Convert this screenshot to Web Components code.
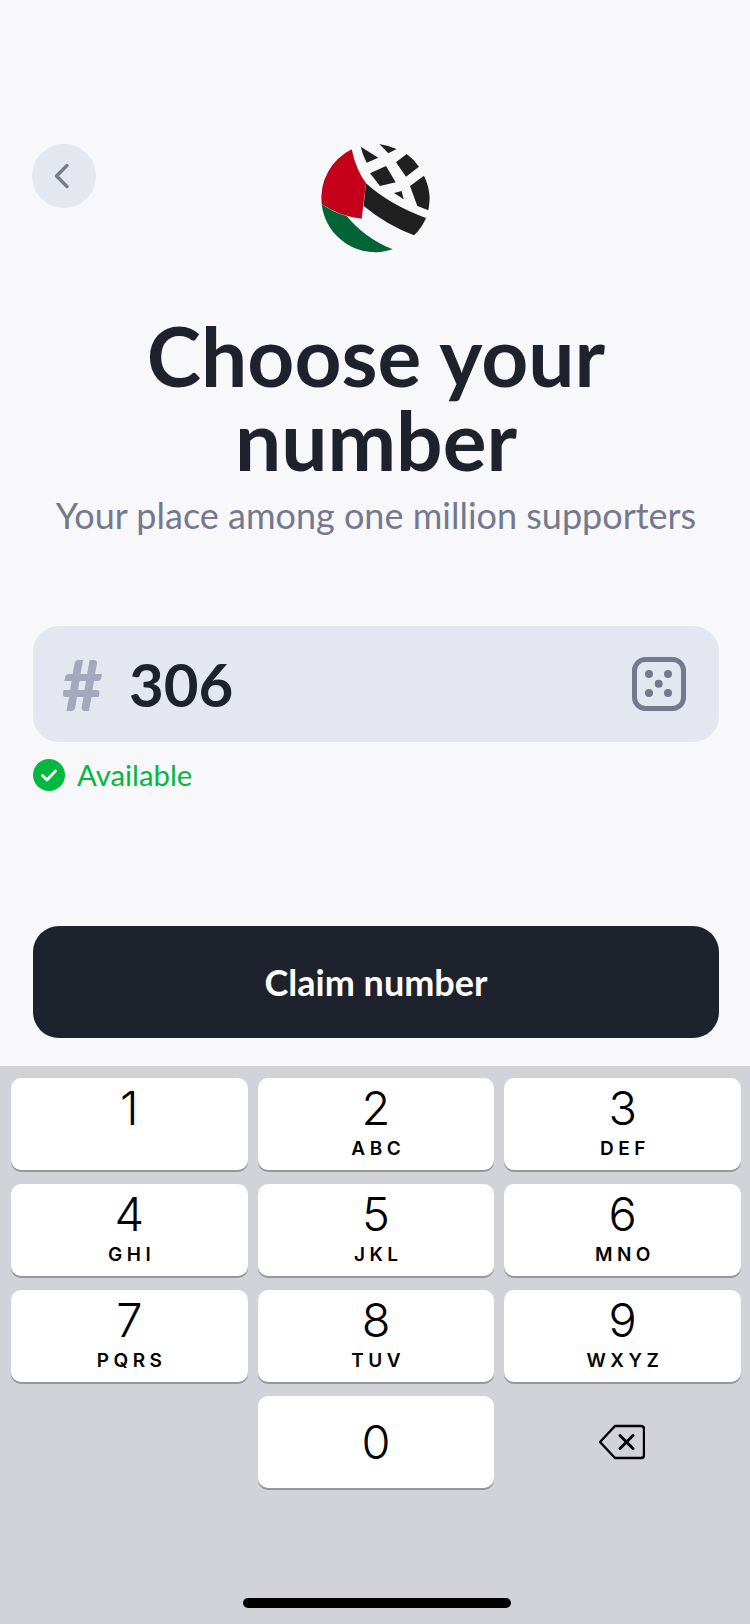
<!DOCTYPE html>
<html lang="en">
<head>
<meta charset="utf-8">
<title>Choose your number</title>
<style>
  html, body { margin: 0; padding: 0; background: #f8f8fb; }
  body { width: 750px; height: 1624px; overflow: hidden; font-family: Lato, "Noto Sans", sans-serif; }
</style>
</head>
<body>
<claim-screen>
  <top-bar></top-bar>
  <intro-text heading="Choose your number" sub="Your place among one million supporters"></intro-text>
  <number-field value="306"></number-field>
  <status-line>Available</status-line>
  <claim-button>Claim number</claim-button>
</claim-screen>
<num-pad>
  <pad-key digit="1"></pad-key>
  <pad-key digit="2" letters="ABC"></pad-key>
  <pad-key digit="3" letters="DEF"></pad-key>
  <pad-key digit="4" letters="GHI"></pad-key>
  <pad-key digit="5" letters="JKL"></pad-key>
  <pad-key digit="6" letters="MNO"></pad-key>
  <pad-key digit="7" letters="PQRS"></pad-key>
  <pad-key digit="8" letters="TUV"></pad-key>
  <pad-key digit="9" letters="WXYZ"></pad-key>
  <pad-key blank></pad-key>
  <pad-key digit="0" center></pad-key>
  <pad-key erase></pad-key>
</num-pad>

<script>
class ClaimScreen extends HTMLElement {
  constructor() {
    super();
    this._shadowRoot = this.attachShadow({ mode: "open" });
    this._shadowRoot.innerHTML = `
      <style>
        :host { display: flex; flex-direction: column; height: 1066px; box-sizing: border-box; padding: 144px 31px 28px 33px; }
      </style>
      <slot></slot>`;
  }
}

class TopBar extends HTMLElement {
  constructor() {
    super();
    this._shadowRoot = this.attachShadow({ mode: "open" });
    this._shadowRoot.innerHTML = `
      <style>
        :host { display: grid; grid-template-columns: 64px 1fr 64px; align-items: start; height: 110px; margin-left: -1px; }
        .back { width: 64px; height: 64px; border-radius: 50%; background: #e4e7ef; display: flex; align-items: center; justify-content: center; }
        .logo { justify-self: center; display: block; margin: -14px 0 0 -1px; }
      </style>
      <div class="back">
        <svg width="24" height="28" viewBox="0 0 24 28" fill="none"><path d="M15 3.5 L4.5 14 L15 24.5" stroke="#767b8a" stroke-width="3.4" stroke-linecap="round" stroke-linejoin="round"/></svg>
      </div>
      <svg class="logo" width="150" height="130" viewBox="0 0 450 390">
        <path fill="#c5001a" d="M155 58 A162 162 0 0 0 65 222 Q115 258 185 266 L198 160 Q168 120 155 58Z"/>
        <path fill="#006437" d="M65 222 A162 162 0 0 0 278 358 Q195 325 140 258 Q100 248 65 222Z"/>
        <g fill="#202020">
          <path d="M198 160 Q270 225 378 264 Q365 295 342 316 Q260 285 191 228Z"/>
          <path d="M182 50 L235 83 L200 98 Q188 75 182 50Z"/>
          <path d="M238 42 Q265 46 290 57 L265 70Z"/>
          <path d="M320 72 Q342 88 357 110 L318 140 L288 97Z"/>
          <path d="M258 108 L287 157 L240 168 L210 130Z"/>
          <path d="M282 189 L305 183 L311 208Z"/>
          <path d="M372 137 Q388 170 389 205 Q388 225 385 241 L352 228 L330 168Z"/>
        </g>
      </svg>`;
  }
}

class IntroText extends HTMLElement {
  constructor() {
    super();
    this._shadowRoot = this.attachShadow({ mode: "open" });
  }
  connectedCallback() {
    this._shadowRoot.innerHTML = `
      <style>
        :host { display: block; text-align: center; margin-top: 59px; }
        h1 { margin: 0 auto; width: 560px; font: 700 82px/84px Lato, sans-serif; color: #1e222c; }
        p { margin: 12px 0 0; font: 400 36px/44px Lato, sans-serif; color: #75798f; }
      </style>
      <h1>${this.getAttribute("heading")}</h1>
      <p>${this.getAttribute("sub")}</p>`;
  }
}

class NumberField extends HTMLElement {
  constructor() {
    super();
    this._shadowRoot = this.attachShadow({ mode: "open" });
  }
  connectedCallback() {
    this._shadowRoot.innerHTML = `
      <style>
        :host { display: flex; align-items: center; height: 116px; margin-top: 89px; padding: 0 33px 0 29px; border-radius: 26px; background: #e4e7ef; }
        .hash { width: 67px; font: 900 70px/1 Lato, sans-serif; color: #a5a8bd; }
        .val { flex: 1; font: 700 60px/1 Lato, sans-serif; color: #1e222c; }
      </style>
      <span class="hash">#</span>
      <span class="val">${this.getAttribute("value")}</span>
      <svg width="54" height="54" viewBox="0 0 54 54" fill="none">
        <rect x="2.5" y="2.5" width="49" height="49" rx="11" stroke="#75798f" stroke-width="5"/>
        <g fill="#75798f"><circle cx="17" cy="17" r="4"/><circle cx="36" cy="17" r="4"/><circle cx="26.7" cy="26.7" r="4"/><circle cx="17" cy="36" r="4"/><circle cx="36" cy="36" r="4"/></g>
      </svg>`;
  }
}

class StatusLine extends HTMLElement {
  constructor() {
    super();
    this._shadowRoot = this.attachShadow({ mode: "open" });
    this._shadowRoot.innerHTML = `
      <style>
        :host { display: flex; align-items: center; gap: 12px; margin-top: 17px; height: 32px; font: 400 29.3px/32px Lato, sans-serif; color: #00b93e; }
      </style>
      <svg width="32" height="32" viewBox="0 0 32 32"><circle cx="16" cy="16" r="16" fill="#00b93e"/><path d="M9.5 16.5 L14 21 L22.5 12" fill="none" stroke="#fff" stroke-width="2.8" stroke-linecap="round" stroke-linejoin="round"/></svg>
      <slot></slot>`;
  }
}

class ClaimButton extends HTMLElement {
  constructor() {
    super();
    this._shadowRoot = this.attachShadow({ mode: "open" });
    this._shadowRoot.innerHTML = `
      <style>
        :host { display: flex; align-items: center; justify-content: center; height: 112px; margin-top: auto; border-radius: 26px; background: #1e222c; color: #fff; font: 700 36px/1 Lato, sans-serif; }
      </style>
      <slot></slot>`;
  }
}

class NumPad extends HTMLElement {
  constructor() {
    super();
    this._shadowRoot = this.attachShadow({ mode: "open" });
    this._shadowRoot.innerHTML = `
      <style>
        :host { display: block; position: relative; height: 558px; box-sizing: border-box; padding: 12px 9px 0 11px; background: #d1d3d9; }
        .grid { display: grid; grid-template-columns: repeat(3, 1fr); grid-auto-rows: 92px; gap: 14px 10px; }
        .home { position: absolute; left: 243px; bottom: 16px; width: 268px; height: 10px; border-radius: 5px; background: #000; }
      </style>
      <div class="grid"><slot></slot></div>
      <div class="home"></div>`;
  }
}

class PadKey extends HTMLElement {
  constructor() {
    super();
    this._shadowRoot = this.attachShadow({ mode: "open" });
  }
  connectedCallback() {
    const digit = this.getAttribute("digit");
    const letters = this.getAttribute("letters");
    let body = "";
    if (digit) {
      body = `<span class="d">${digit}</span>` + (letters ? `<span class="l">${letters}</span>` : "");
    } else if (this.hasAttribute("erase")) {
      body = `<svg style="margin-right:2px" width="46" height="36" viewBox="0 0 46 36" fill="none" stroke="#000" stroke-linejoin="round" stroke-linecap="round">
        <path d="M16 2 H42 Q45 2 45 5 V31 Q45 34 42 34 H16 L1 18Z" stroke-width="2.4"/>
        <path d="M21 11.5 L34 24.5 M34 11.5 L21 24.5" stroke-width="3"/></svg>`;
    }
    const plain = !digit;
    const centered = plain || this.hasAttribute("center");
    this._shadowRoot.innerHTML = `
      <style>
        :host { display: block; }
        .key { height: 100%; box-sizing: border-box; display: flex; flex-direction: column; align-items: center; color: #000; font-family: Inter, sans-serif;
          ${centered ? "justify-content: center;" : ""}
          ${plain ? "" : "background: #fff; border-radius: 10px; box-shadow: 0 2px 0 #96979b;"} }
        .d { font-size: 47px; font-weight: 300; line-height: 56px; margin-top: ${centered ? 0 : 2}px; }
        .l { font-size: 19px; font-weight: 600; line-height: 20px; letter-spacing: 4.5px; margin-top: 3px; padding-left: 4.5px; }
      </style>
      <div class="key">${body}</div>`;
  }
}

customElements.define("claim-screen", ClaimScreen);
customElements.define("top-bar", TopBar);
customElements.define("intro-text", IntroText);
customElements.define("number-field", NumberField);
customElements.define("status-line", StatusLine);
customElements.define("claim-button", ClaimButton);
customElements.define("num-pad", NumPad);
customElements.define("pad-key", PadKey);
</script>
</body>
</html>
